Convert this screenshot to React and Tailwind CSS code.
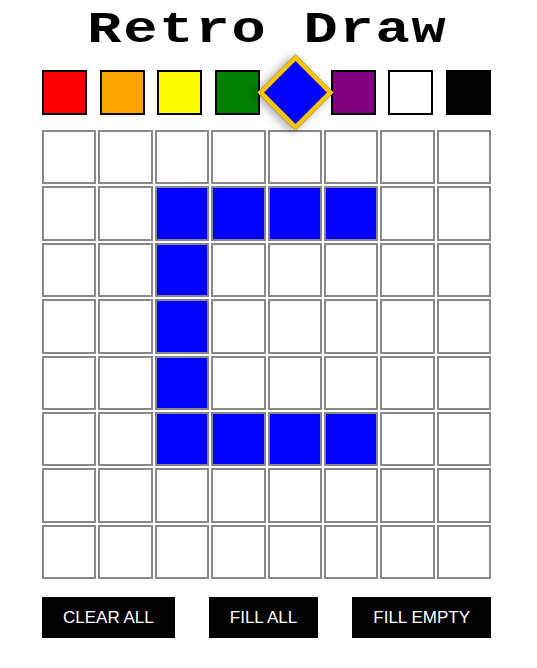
import React, { useState } from "react";

const COLORS = [
  { name: "red", cls: "bg-[#ff0000]", hex: "#ff0000" },
  { name: "orange", cls: "bg-[#ffa500]", hex: "#ffa500" },
  { name: "yellow", cls: "bg-[#ffff00]", hex: "#ffff00" },
  { name: "green", cls: "bg-[#008000]", hex: "#008000" },
  { name: "blue", cls: "bg-[#0000ff]", hex: "#0000ff" },
  { name: "purple", cls: "bg-[#800080]", hex: "#800080" },
  { name: "white", cls: "bg-white", hex: "#ffffff" },
  { name: "black", cls: "bg-black", hex: "#000000" },
];

const initial = () => {
  const g = Array(64).fill(null);
  const blue = "#0000ff";
  [10, 11, 12, 13, 18, 26, 34, 42, 43, 44, 45].forEach((i) => (g[i] = blue));
  return g;
};

export default function App() {
  const [selected, setSelected] = useState(4);
  const [grid, setGrid] = useState(initial);
  const color = COLORS[selected].hex;

  return (
    <div className="min-h-screen bg-white">
      <div className="ml-[42px] w-[449px] flex flex-col items-center">
        <h1 className="mt-[2px] h-[56px] text-[57px] leading-[56px] tracking-[1.8px] pl-[1.8px] scale-y-[0.78] font-bold text-black font-['Courier_New','Liberation_Mono',monospace]">
          Retro Draw
        </h1>
        <div className="mt-[12px] w-full flex justify-between">
          {COLORS.map((c, i) => (
            <button
              key={c.name}
              onClick={() => setSelected(i)}
              className={
                i === selected
                  ? `w-[45px] h-[45px] ${c.cls} border-4 border-[#f7c600] rotate-45 scale-[1.2] shadow-[-1px_3px_8px_rgba(0,0,0,0.35)]`
                  : `w-[45px] h-[45px] ${c.cls} border-2 border-black`
              }
            />
          ))}
        </div>
        <div className="mt-[15px] w-full grid grid-cols-8 gap-[2px]">
          {grid.map((cell, i) => (
            <div
              key={i}
              onClick={() => setGrid((g) => g.map((v, j) => (j === i ? color : v)))}
              className="h-[54.4px] border-2 border-[#888888]"
              style={{ backgroundColor: cell || "#ffffff" }}
            />
          ))}
        </div>
        <div className="mt-[18px] w-full flex justify-between font-['Liberation_Sans',Arial,sans-serif] text-[17px] text-white">
          <button
            onClick={() => setGrid(Array(64).fill(null))}
            className="h-[41px] px-[21px] bg-black"
          >
            CLEAR ALL
          </button>
          <button
            onClick={() => setGrid(Array(64).fill(color))}
            className="h-[41px] px-[21px] bg-black"
          >
            FILL ALL
          </button>
          <button
            onClick={() => setGrid((g) => g.map((v) => v || color))}
            className="h-[41px] px-[21px] bg-black"
          >
            FILL EMPTY
          </button>
        </div>
      </div>
    </div>
  );
}
